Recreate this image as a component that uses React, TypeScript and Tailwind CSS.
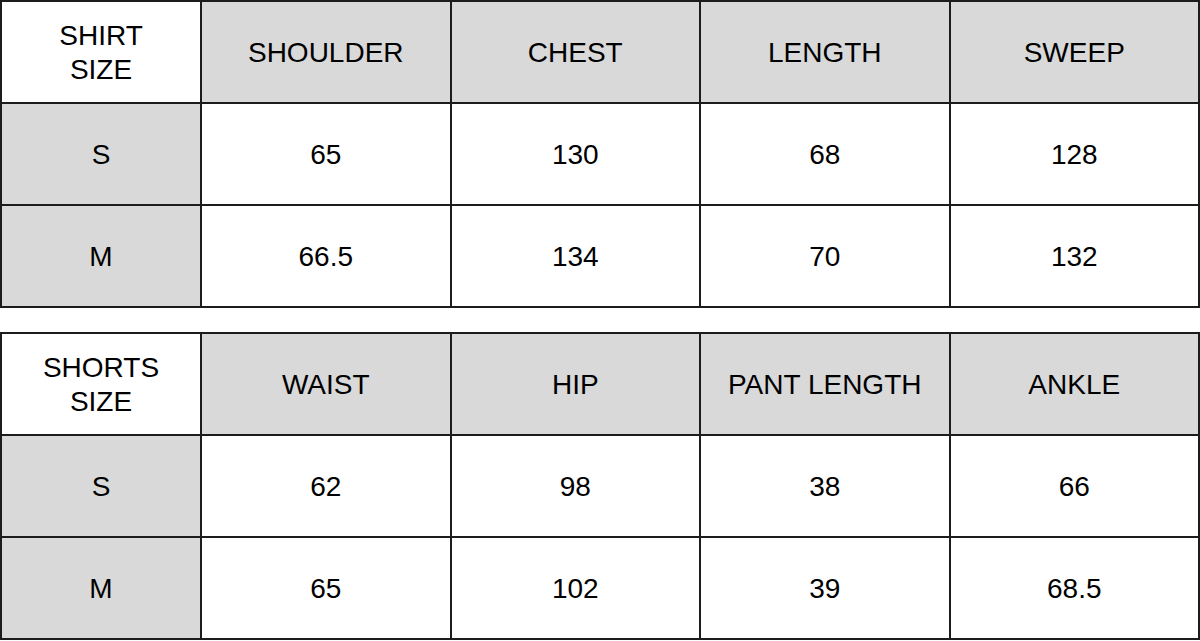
type Row = { size: string; values: string[] };

interface SizeTableProps {
  label: [string, string];
  columns: string[];
  rows: Row[];
}

const shirt: SizeTableProps = {
  label: ['SHIRT', 'SIZE'],
  columns: ['SHOULDER', 'CHEST', 'LENGTH', 'SWEEP'],
  rows: [
    { size: 'S', values: ['65', '130', '68', '128'] },
    { size: 'M', values: ['66.5', '134', '70', '132'] },
  ],
};

const shorts: SizeTableProps = {
  label: ['SHORTS', 'SIZE'],
  columns: ['WAIST', 'HIP', 'PANT LENGTH', 'ANKLE'],
  rows: [
    { size: 'S', values: ['62', '98', '38', '66'] },
    { size: 'M', values: ['65', '102', '39', '68.5'] },
  ],
};

const cell =
  'flex min-h-[102px] items-center justify-center border-r-2 border-b-2 border-[#1c1c1c] pt-[2px] text-center';

function SizeTable({ label, columns, rows }: SizeTableProps) {
  return (
    <div className="grid w-[1200px] grid-cols-[200px_repeat(4,1fr)] border-t-2 border-l-2 border-[#1c1c1c]">
      {/* header */}
      <div className={`${cell} flex-col bg-white leading-[34px]`}>
        <span>{label[0]}</span>
        <span>{label[1]}</span>
      </div>
      {columns.map((c) => (
        <div key={c} className={`${cell} bg-[#d9d9d9]`}>
          {c}
        </div>
      ))}

      {/* size rows */}
      {rows.map((r) => (
        <div key={r.size} className="contents">
          <div className={`${cell} bg-[#d9d9d9]`}>{r.size}</div>
          {r.values.map((v, i) => (
            <div key={i} className={`${cell} bg-white`}>
              {v}
            </div>
          ))}
        </div>
      ))}
    </div>
  );
}

export default function App() {
  return (
    <div className="flex h-[641px] w-[1200px] flex-col gap-6 bg-white font-['Liberation_Sans',Arial,sans-serif] text-[28px] text-black">
      <SizeTable {...shirt} />
      <SizeTable {...shorts} />
    </div>
  );
}
